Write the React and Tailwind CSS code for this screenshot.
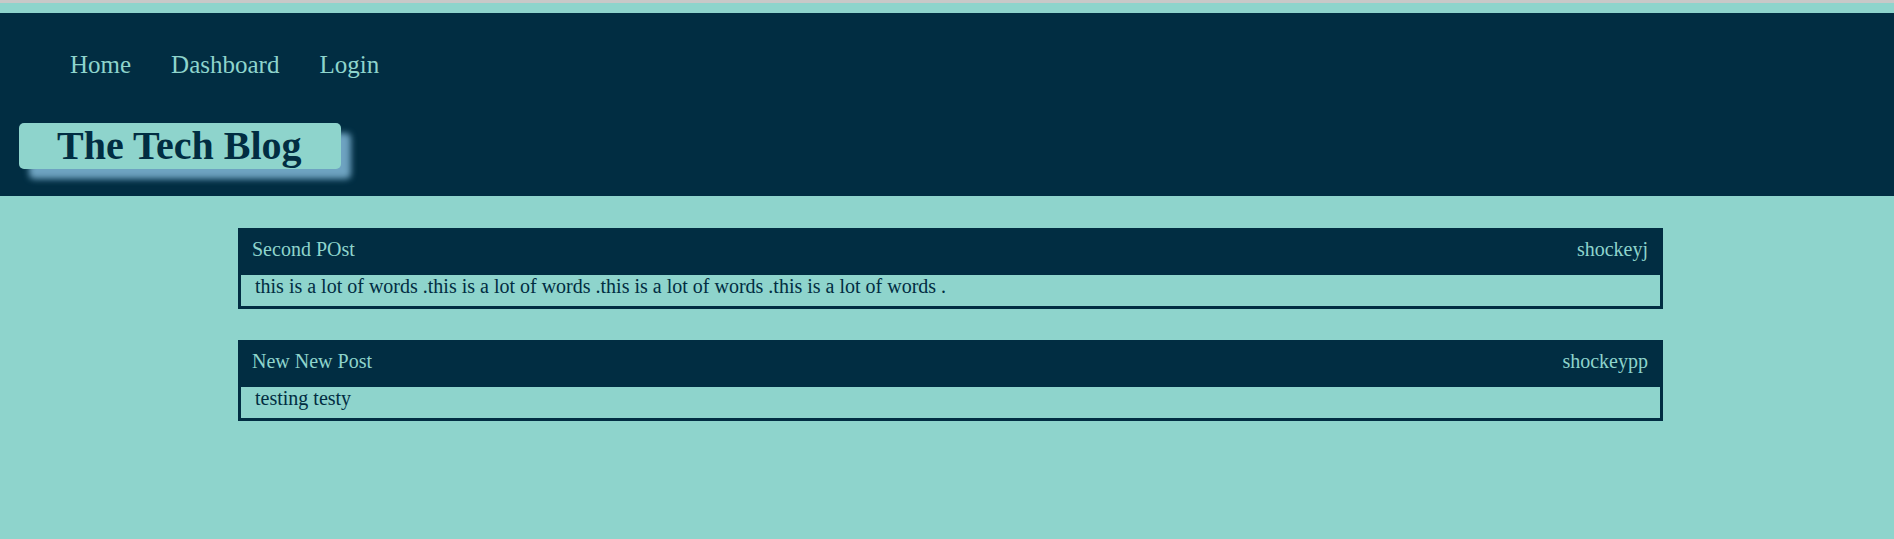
export default function App() {
  const posts = [
    { title: "Second POst", user: "shockeyj", body: "this is a lot of words .this is a lot of words .this is a lot of words .this is a lot of words ." },
    { title: "New New Post", user: "shockeypp", body: "testing testy" },
  ];
  return (
    <div className="min-h-[539px] bg-[#8ed4cc] font-['Liberation_Serif',serif]">
      <div className="h-[3px] bg-[#c8c8c8]" />
      <div className="h-[10px]" />
      <header className="h-[183px] bg-[#012d42] pt-[37px]">
        <nav className="flex gap-[40px] pl-[70px] text-[25px] leading-[29px] text-[#8ed4cc]">
          <a>Home</a>
          <a>Dashboard</a>
          <a>Login</a>
        </nav>
        <div className="ml-[19px] mt-[44px] h-[46px] w-[322px] rounded-[5px] bg-[#8ed4cc] pl-[38px] shadow-[10px_10px_6px_#6ea3c1]">
          <h1 className="whitespace-nowrap text-[40px] font-bold leading-[46px] text-[#012d42]">The Tech Blog</h1>
        </div>
      </header>
      <main className="ml-[238px] w-[1425px] pt-[32px]">
        {posts.map((p, i) => (
          <div key={i} className={`border-[3px] border-[#012d42] ${i > 0 ? "mt-[31px]" : ""}`}>
            <div className="flex h-[44px] justify-between bg-[#012d42] pl-[11px] pr-[12px] pt-[7px] text-[20px] leading-[23px] text-[#8ed4cc]">
              <span>{p.title}</span>
              <span>{p.user}</span>
            </div>
            <div className="h-[31px] pl-[14px] text-[20px] leading-[23px] text-[#012d42]">{p.body}</div>
          </div>
        ))}
      </main>
    </div>
  );
}
